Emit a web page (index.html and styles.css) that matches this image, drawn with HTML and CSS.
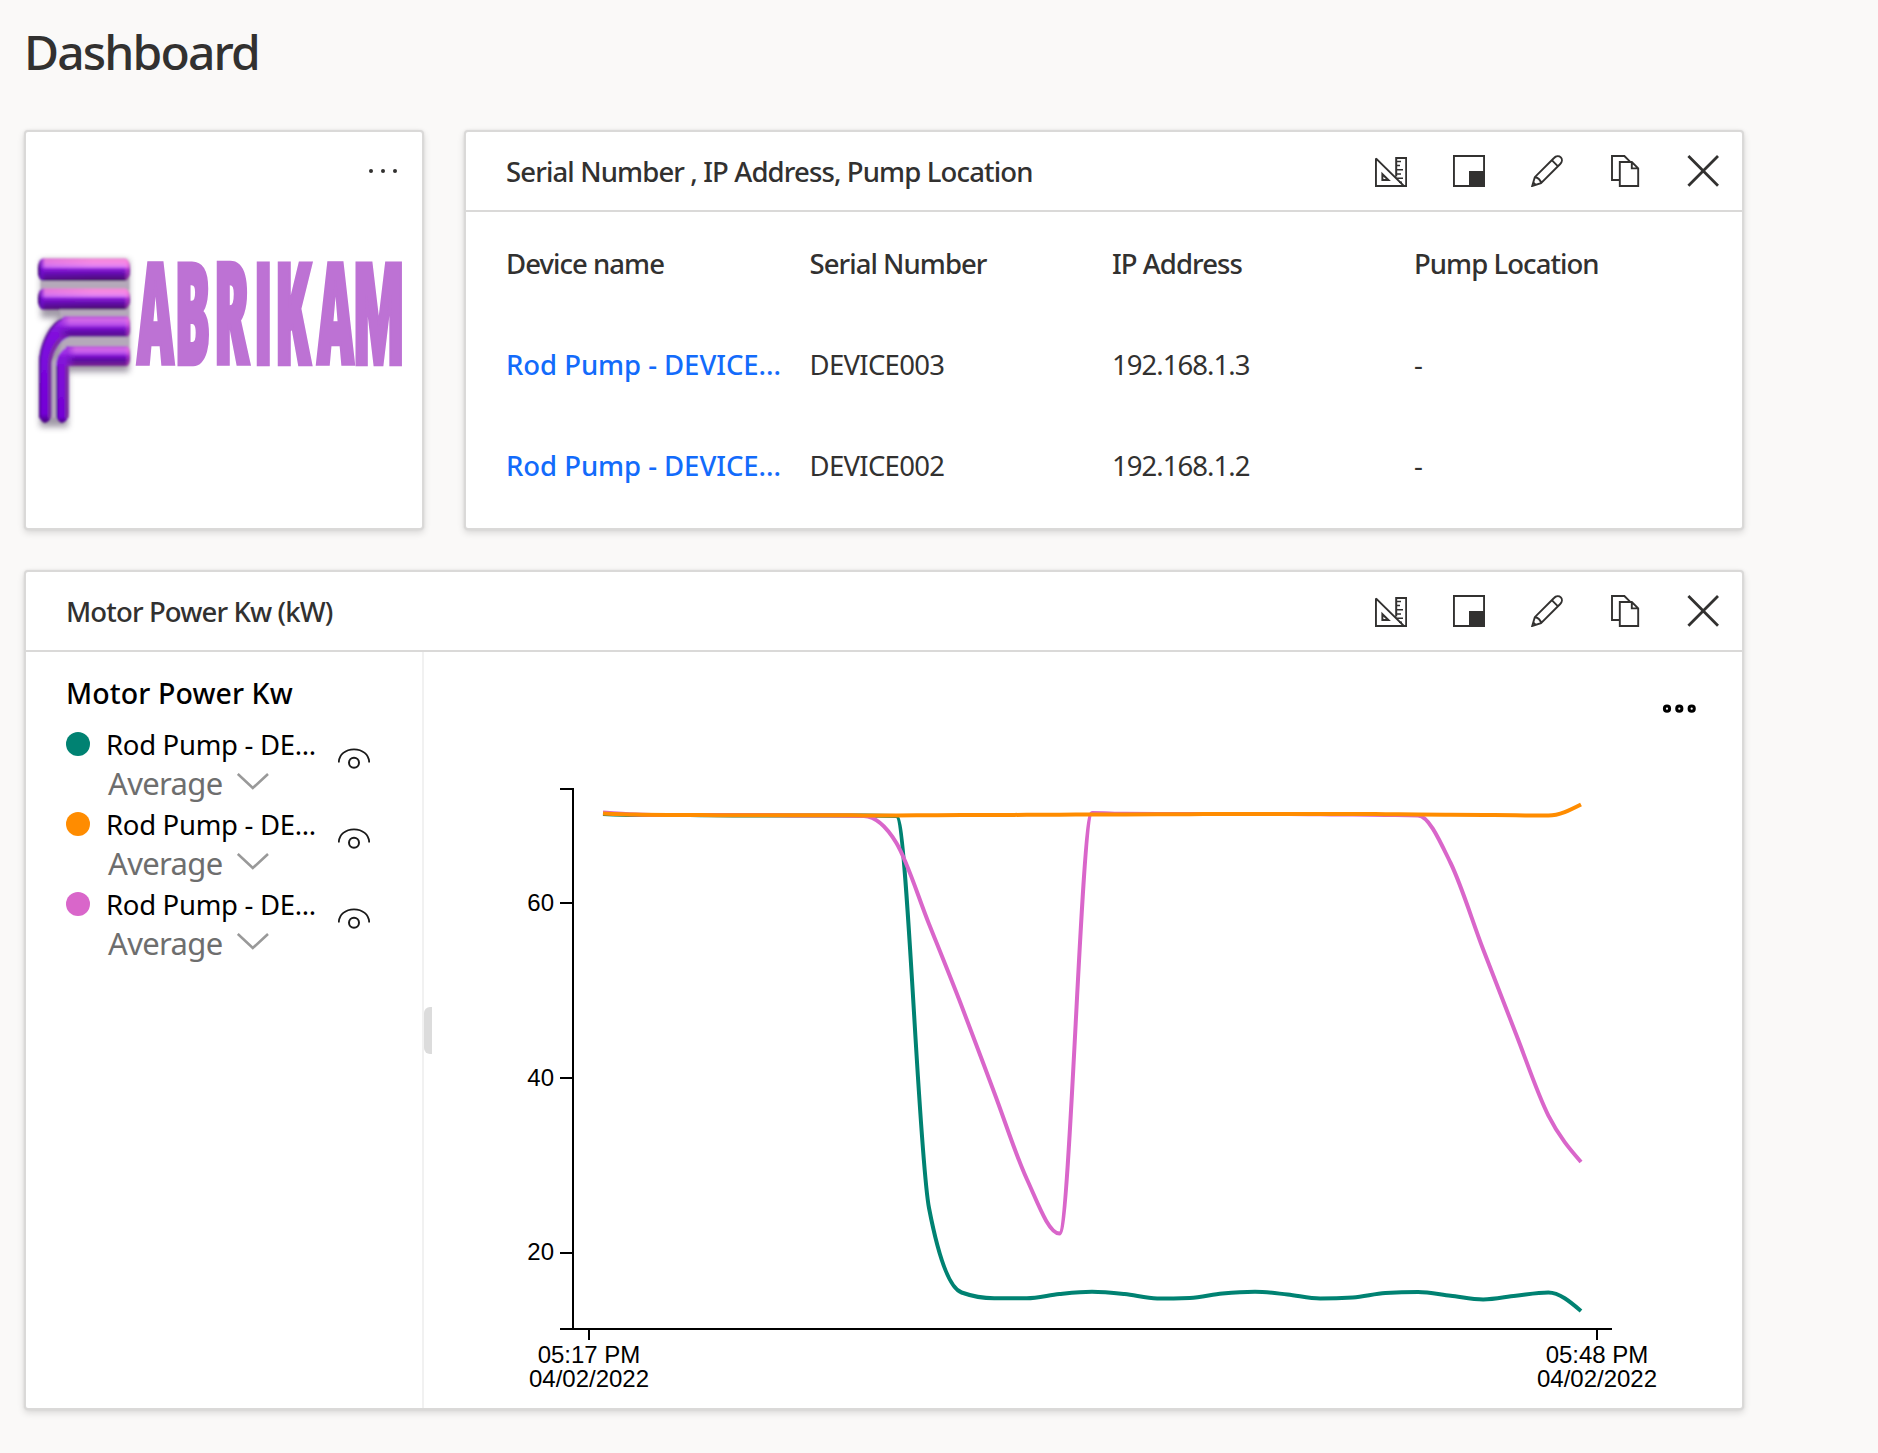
FILE: index.html
```html
<!DOCTYPE html>
<html lang="en">
<head>
<meta charset="utf-8">
<title>Dashboard</title>
<link rel="stylesheet" href="styles.css">
</head>
<body>
<svg class="sprite" aria-hidden="true">
  <symbol id="i-measure" viewBox="0 0 32 32"><path d="M.9 3.2V31H31.2V2.9H21.2V21.5M.9 3.4L28.6 30.6M7.4 19.2V25H13.4Z"/><path d="M21 6.5h5M21 10.5h4M21 14.7h7M21 19h5M21 23.2h7M24 27.2h3" stroke-width="1.6"/></symbol>
  <symbol id="i-size" viewBox="0 0 32 32"><path d="M.9 1H31.1V31H.9Z"/><path d="M16 16H32V32H16Z" fill="currentColor" stroke="none"/></symbol>
  <symbol id="i-edit" viewBox="0 0 32 32"><path d="M1.2 31L3.8 22.2L23 3C25 .9 28 .7 29.8 2.4C31.5 4.2 31.2 7 29.2 9L10 28.2ZM20.8 5.2L27 11.4M3.8 22.2C6.6 22 9.8 25.2 10 28.2M2.3 27.4L4.8 29.9" stroke-width="1.9"/></symbol>
  <symbol id="i-copy" viewBox="0 0 32 32"><path d="M10.8 25H3V1H15.4L21 6.6M10.8 7H22.8L29.2 13.4V31H10.8ZM22.8 7V13.4H29.2" stroke-width="1.9"/></symbol>
  <symbol id="i-close" viewBox="0 0 32 32"><path d="M1.4 1L31 30.8M31 1L1.4 30.8" stroke-width="2.8"/></symbol>
  <symbol id="i-eye" viewBox="0 0 32 21"><path d="M.8 14.5C1 6.5 7.6 1.3 16 1.3S31 6.5 31.2 14.5" stroke-width="1.8"/><circle cx="16" cy="14.7" r="5" stroke-width="2"/></symbol>
  <symbol id="i-chevron" viewBox="0 0 32 17"><path d="M.8 1L15.8 15L31 1" stroke-width="2.6"/></symbol>
</svg>

<h1 class="page-title">Dashboard</h1>

<main class="tiles">
  <section class="tile tile-logo">
    <svg class="logo" viewBox="26 132 396 396">
      <defs>
        <linearGradient id="tube" x1="0" y1="0" x2="0" y2="1">
          <stop offset="0" stop-color="#f684d8"/><stop offset=".2" stop-color="#f48ae6"/><stop offset=".36" stop-color="#dc7cf4"/><stop offset=".48" stop-color="#8a1cd6"/><stop offset=".7" stop-color="#5f0ca8"/><stop offset="1" stop-color="#4b1068"/>
        </linearGradient>
        <linearGradient id="tube-low" x1="0" y1="0" x2="0" y2="1">
          <stop offset="0" stop-color="#b45cd0"/><stop offset=".18" stop-color="#d468ea"/><stop offset=".36" stop-color="#b850ea"/><stop offset=".5" stop-color="#8014d0"/><stop offset=".7" stop-color="#5a0ca0"/><stop offset="1" stop-color="#7a2890"/>
        </linearGradient>
        <linearGradient id="shade" x1="0" y1="0" x2="1" y2="0">
          <stop offset="0" stop-color="#2a0050" stop-opacity=".95"/><stop offset=".03" stop-color="#6a08c8" stop-opacity=".8"/><stop offset=".08" stop-color="#7c0ae0" stop-opacity=".15"/><stop offset=".6" stop-color="#7c0ae0" stop-opacity="0"/><stop offset=".93" stop-color="#ff8ae4" stop-opacity="0"/><stop offset=".98" stop-color="#ff5ad0" stop-opacity=".4"/><stop offset="1" stop-color="#5a1070" stop-opacity=".5"/>
        </linearGradient>
        <linearGradient id="shade-low" x1="0" y1="0" x2="1" y2="0">
          <stop offset="0" stop-color="#8a18dc" stop-opacity=".75"/><stop offset=".15" stop-color="#8a18dc" stop-opacity="0"/><stop offset=".92" stop-color="#ff8ae4" stop-opacity="0"/><stop offset=".98" stop-color="#ff5ad0" stop-opacity=".4"/><stop offset="1" stop-color="#5a1070" stop-opacity=".5"/>
        </linearGradient>
        <linearGradient id="bend3" gradientUnits="userSpaceOnUse" x1="0" y1="315" x2="0" y2="425">
          <stop offset="0" stop-color="#a83ce0"/><stop offset=".06" stop-color="#a030ea"/><stop offset=".12" stop-color="#8414dc"/><stop offset=".3" stop-color="#7c0ade"/><stop offset=".9" stop-color="#7300d6"/><stop offset="1" stop-color="#3a0560"/>
        </linearGradient>
        <linearGradient id="bend4" gradientUnits="userSpaceOnUse" x1="0" y1="344" x2="0" y2="425">
          <stop offset="0" stop-color="#a83ce0"/><stop offset=".1" stop-color="#a030e8"/><stop offset=".17" stop-color="#8414d8"/><stop offset=".9" stop-color="#7300d6"/><stop offset="1" stop-color="#3a0560"/>
        </linearGradient>
        <filter id="soft" x="-20%" y="-20%" width="140%" height="140%"><feGaussianBlur stdDeviation="3"/></filter>
        <filter id="smooth"><feGaussianBlur stdDeviation=".9"/></filter>
      </defs>
      <g fill="#554860" opacity=".55" filter="url(#soft)">
        <path d="M41 260H129V372H68V427H40V360Q42 332 60 318H41Z"/>
      </g>
      <g filter="url(#smooth)">
        <path d="M41 278H129V290H41ZM60 307H129V320H60ZM64 335H129V349H64L52 362V418H56V362Z" fill="#b5a9ba"/>
        <rect x="38" y="258.5" width="92" height="22.5" rx="5" ry="10" fill="url(#tube)"/>
        <rect x="38" y="258.5" width="92" height="22.5" rx="5" ry="10" fill="url(#shade)"/>
        <rect x="38" y="288.5" width="92" height="21" rx="5" ry="10" fill="url(#tube)"/>
        <rect x="38" y="288.5" width="92" height="21" rx="5" ry="10" fill="url(#shade)"/>
        <path d="M70 316C50 318 39 345 39 364V414Q40 422 45 423Q51 421 51.500 414V364C52 352 60 339 70 337Z" fill="url(#bend3)"/>
        <path d="M71 346C61 348 56 357 56 366V414Q57 422 62 423Q68 421 68.500 414V366H71Z" fill="url(#bend4)"/>
        <path d="M49.700 418V364C50 352 57 339 66 335.500M66.800 418V366" fill="none" stroke="#7c2ca0" stroke-width="3.400"/>
        <path d="M39.800 418V364C40 346 50 322 65 318M57 418V366" fill="none" stroke="#4a0a86" stroke-width="1.500"/>
        <path d="M63 317Q64 316 67 316H127Q130 317 130 327T127 337H66Q62 338 60 340Q58 328 63 317Z" fill="url(#tube-low)"/>
        <path d="M63 317Q64 316 67 316H127Q130 317 130 327T127 337H66Q62 338 60 340Q58 328 63 317Z" fill="url(#shade-low)"/>
        <path d="M66 346H127Q130 347 130 356T127 366H66Z" fill="url(#tube-low)"/>
        <path d="M66 346H127Q130 347 130 356T127 366H66Z" fill="url(#shade-low)"/>
      </g>
      <g transform="translate(0 364.300) scale(.46 1)"><text class="wordmark" x="298 380 465 552 598 689 767" y="0">ABRIKAM</text></g>
    </svg>
    <svg class="tile-more" viewBox="0 0 28 6"><circle cx="2" cy="3" r="2"/><circle cx="14" cy="3" r="2"/><circle cx="26" cy="3" r="2"/></svg>
  </section>

  <section class="tile">
    <header class="tile-head">
      <h2>Serial Number , IP Address, Pump Location</h2>
      <div class="actions">
        <svg><use href="#i-measure"/></svg><svg><use href="#i-size"/></svg><svg><use href="#i-edit"/></svg><svg><use href="#i-copy"/></svg><svg><use href="#i-close"/></svg>
      </div>
    </header>
    <div class="table">
      <div class="row row-head"><span>Device name</span><span>Serial Number</span><span>IP Address</span><span>Pump Location</span></div>
      <div class="row"><a>Rod Pump - DEVICE...</a><span>DEVICE003</span><span class="ip">192.168.1.3</span><span>-</span></div>
      <div class="row"><a>Rod Pump - DEVICE...</a><span>DEVICE002</span><span class="ip">192.168.1.2</span><span>-</span></div>
    </div>
  </section>

  <section class="tile tile-wide">
    <header class="tile-head">
      <h2>Motor Power Kw (kW)</h2>
      <div class="actions">
        <svg><use href="#i-measure"/></svg><svg><use href="#i-size"/></svg><svg><use href="#i-edit"/></svg><svg><use href="#i-copy"/></svg><svg><use href="#i-close"/></svg>
      </div>
    </header>
    <div class="chart-body">
      <aside class="legend">
        <h3>Motor Power Kw</h3>
        <div class="series">
          <i class="dot teal"></i>
          <div class="series-text"><span class="name">Rod Pump - DE...</span><span class="agg">Average<svg><use href="#i-chevron"/></svg></span></div>
          <svg class="eye"><use href="#i-eye"/></svg>
        </div>
        <div class="series">
          <i class="dot orange"></i>
          <div class="series-text"><span class="name">Rod Pump - DE...</span><span class="agg">Average<svg><use href="#i-chevron"/></svg></span></div>
          <svg class="eye"><use href="#i-eye"/></svg>
        </div>
        <div class="series">
          <i class="dot pink"></i>
          <div class="series-text"><span class="name">Rod Pump - DE...</span><span class="agg">Average<svg><use href="#i-chevron"/></svg></span></div>
          <svg class="eye"><use href="#i-eye"/></svg>
        </div>
      </aside>
      <div class="splitter"></div>
      <svg class="chart" viewBox="432 652 1310 756">
        <g class="axis">
          <path d="M560 789H573V1329M560 903H573M560 1078H573M560 1253H573M560 1329H1612M589 1329V1340M1597 1329V1340"/>
          <g text-anchor="end"><text x="554" y="911">60</text><text x="554" y="1086">40</text><text x="554" y="1260">20</text></g>
          <g text-anchor="middle"><text x="589" y="1363">05:17 PM</text><text x="589" y="1387">04/02/2022</text><text x="1597" y="1363">05:48 PM</text><text x="1597" y="1387">04/02/2022</text></g>
        </g>
        <g id="lines" class="lines"></g>
        <g class="chart-more"><circle cx="1667" cy="708.7" r="2.6"/><circle cx="1679.3" cy="708.7" r="2.6"/><circle cx="1691.7" cy="708.7" r="2.6"/></g>
      </svg>
    </div>
  </section>
</main>
<script src="chart.js"></script>
</body>
</html>
```
FILE: styles.css
```css
* { box-sizing: border-box; }

body {
  margin: 0;
  min-height: 1453px;
  padding: 20px 24px 0;
  background: #faf9f8;
  color: #323130;
  font-family: "Noto Sans", "Open Sans", sans-serif;
  font-size: 27.5px;
}

h1, h2, h3 { margin: 0; font-weight: 500; }

svg { display: block; }

.sprite { position: absolute; width: 0; height: 0; }

.page-title {
  height: 110px;
  font-size: 48px;
  line-height: 64px;
  letter-spacing: -1.86px;
}

.tiles {
  display: grid;
  grid-template-columns: 400px 1280px;
  grid-template-rows: 400px 840px;
  gap: 40px;
}

.tile {
  display: flex;
  flex-direction: column;
  background: #fff;
  border: 2px solid #dad9d8;
  border-radius: 4px;
  box-shadow: 0 3px 7px rgba(0, 0, 0, .13), 0 0 3px rgba(0, 0, 0, .08);
}

.tile-wide { grid-column: 1 / 3; }

.tile-head {
  display: flex;
  align-items: center;
  justify-content: space-between;
  height: 80px;
  padding: 0 23px 0 40px;
  border-bottom: 2px solid #dad9d8;
}

.tile-head h2 {
  padding-top: 1px;
  font-size: 27.5px;
  line-height: 38px;
  letter-spacing: -.87px;
}

.actions { display: flex; gap: 46px; }
.actions svg { width: 32px; height: 32px; }

.actions svg, .series svg {
  fill: none;
  stroke: currentColor;
  stroke-width: 2;
}

/* Logo tile */
.tile-logo { position: relative; }
.logo { width: 396px; height: 396px; }

.wordmark {
  font-family: "Open Sans", sans-serif;
  font-size: 140px;
  font-weight: 800;
  font-stretch: 75%;
  fill: #bd72d4;
  stroke: #bd72d4;
  stroke-width: 3.5px;
  vector-effect: non-scaling-stroke;
}

.tile-more {
  position: absolute;
  top: 36px;
  right: 25px;
  width: 28px;
  height: 6px;
  fill: #323130;
}

/* Device table */
.table { padding: 1px 0 0 40px; }

.row {
  display: grid;
  grid-template-columns: 303.5px 302.5px 302px 1fr;
  align-items: center;
  height: 101px;
  letter-spacing: -.69px;
}

.row .ip { letter-spacing: -.95px; }
.row-head { font-weight: 500; letter-spacing: -.95px; }
.row a { color: #136bfb; font-weight: 500; letter-spacing: -.05px; }

/* Chart tile */
.chart-body { display: flex; height: 756px; }

.legend {
  width: 398px;
  padding: 21px 0 0 40px;
  border-right: 2px solid #f1f1f1;
  color: #000;
}

.legend h3 {
  height: 61px;
  font-size: 28.5px;
  line-height: 40px;
  letter-spacing: .1px;
}

.series { display: flex; height: 80px; }

.dot {
  width: 24px;
  height: 24px;
  margin: -2px 16px 0 0;
  border-radius: 50%;
}

.teal { background: #008272; }
.orange { background: #ff8c00; }
.pink { background: #d966ca; }

.series-text { width: 232px; margin-top: -9px; }
.name { display: block; height: 38px; line-height: 40px; letter-spacing: -.3px; }

.agg {
  display: flex;
  gap: 14px;
  height: 40px;
  padding-left: 2px;
  color: #6e6e6e;
  font-size: 31px;
  line-height: 40px;
  letter-spacing: -.65px;
}

.agg svg { width: 32px; height: 17px; margin-top: 10px; color: #999; }
.eye { width: 32px; height: 21px; margin-top: 14px; color: #1a1a1a; }

.splitter {
  width: 8px;
  height: 47px;
  margin-top: 355px;
  border-radius: 6px 0 0 6px;
  background: #dcdcdc;
}

.chart { width: 1310px; height: 756px; }

.axis path { fill: none; stroke: #000; stroke-width: 2; }
.axis text { font-family: "Liberation Sans", Arial, sans-serif; font-size: 24px; fill: #000; }
.lines path { fill: none; stroke-width: 4; }
.chart-more circle { fill: #fff; stroke: #000; stroke-width: 3; }
```
FILE: chart.js
```js
// Vertical positions of the minute samples, one list per device.
const series = [
  { color: '#008272', y: [814, 815, 815, 815.2, 815.4, 815.5, 815.6, 815.6, 815.6, 816, 1208, 1292.5, 1298.3, 1298.2, 1294, 1291.7, 1294, 1298.5, 1298, 1293.5, 1291.7, 1294.5, 1298.5, 1297.5, 1293, 1292, 1295.7, 1299.5, 1295.7, 1292.5, 1311] },
  { color: '#d966ca', y: [812.5, 814.5, 815, 815, 815, 815, 815.4, 815.4, 816, 843, 924, 1006, 1092.5, 1179, 1233.5, 813, 813.8, 814, 814, 814, 814, 814, 814.3, 814.6, 815, 815.5, 863, 949.5, 1033.5, 1115.6, 1162] },
  { color: '#ff8c00', y: [813.5, 814.6, 815, 815.1, 815.2, 815.3, 815.3, 815.3, 815.4, 815.5, 815.2, 815, 815, 814.8, 814.7, 814.5, 814.4, 814.3, 814.2, 814, 814, 814, 814, 814, 814.2, 814.4, 814.7, 815, 815.3, 815.5, 804.5] }
];
const x0 = 603, step = 32.6;

// Monotone cubic interpolation through evenly spaced samples.
function monotonePath(ys) {
  const slopes = ys.slice(1).map((y, i) => (y - ys[i]) / step);
  const n = ys.length;
  const m = ys.map((_, i) => {
    if (i === 0 || i === n - 1) return null;
    const a = slopes[i - 1], b = slopes[i], p = (a + b) / 2;
    return (Math.sign(a) + Math.sign(b)) * Math.min(Math.abs(a), Math.abs(b), Math.abs(p) / 2);
  });
  m[0] = (3 * slopes[0] - m[1]) / 2;
  m[n - 1] = (3 * slopes[n - 2] - m[n - 2]) / 2;
  let d = `M${x0} ${ys[0]}`;
  for (let i = 1; i < n; i++) {
    const xa = x0 + (i - 1) * step, xb = xa + step;
    d += `C${xa + step / 3} ${ys[i - 1] + m[i - 1] * step / 3} ${xb - step / 3} ${ys[i] - m[i] * step / 3} ${xb} ${ys[i]}`;
  }
  return d;
}

const host = document.getElementById('lines');
for (const s of series) {
  const path = document.createElementNS('http://www.w3.org/2000/svg', 'path');
  path.setAttribute('d', monotonePath(s.y));
  path.setAttribute('stroke', s.color);
  host.appendChild(path);
}
```
